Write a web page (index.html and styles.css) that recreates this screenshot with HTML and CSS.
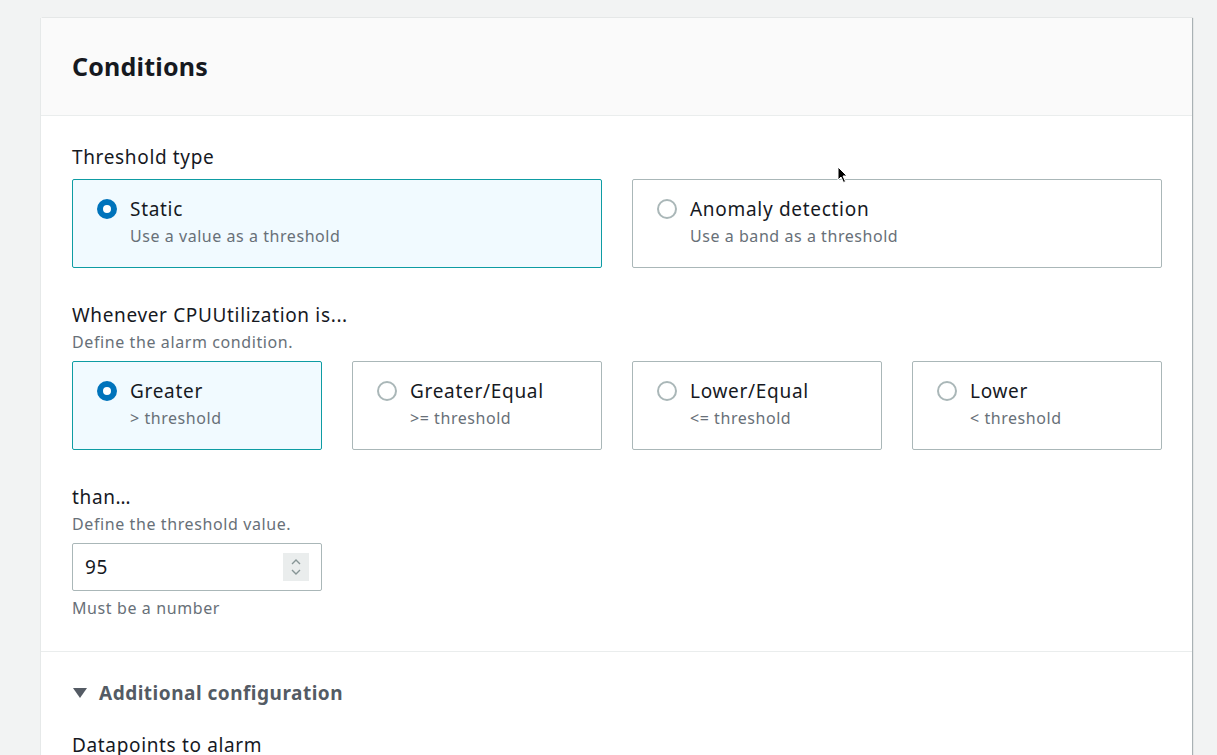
FILE: index.html
```html
<!DOCTYPE html>
<html lang="en">
<head>
<meta charset="utf-8">
<title>Conditions</title>
<link rel="stylesheet" href="styles.css">
</head>
<body>
<div class="page">
  <section class="card">
    <header class="card-header"><h2>Conditions</h2></header>
    <div class="card-body">
      <div class="field first">
        <div class="label">Threshold type</div>
        <div class="tiles two">
          <div class="tile selected"><span class="radio on"></span><div><div class="tile-title">Static</div><div class="tile-sub">Use a value as a threshold</div></div></div>
          <div class="tile"><span class="radio"></span><div><div class="tile-title">Anomaly detection</div><div class="tile-sub">Use a band as a threshold</div></div></div>
        </div>
      </div>
      <div class="field">
        <div class="label">Whenever CPUUtilization is...</div>
        <div class="desc">Define the alarm condition.</div>
        <div class="tiles four">
          <div class="tile selected"><span class="radio on"></span><div><div class="tile-title">Greater</div><div class="tile-sub">&gt; threshold</div></div></div>
          <div class="tile"><span class="radio"></span><div><div class="tile-title">Greater/Equal</div><div class="tile-sub">&gt;= threshold</div></div></div>
          <div class="tile"><span class="radio"></span><div><div class="tile-title">Lower/Equal</div><div class="tile-sub">&lt;= threshold</div></div></div>
          <div class="tile"><span class="radio"></span><div><div class="tile-title">Lower</div><div class="tile-sub">&lt; threshold</div></div></div>
        </div>
      </div>
      <div class="field">
        <div class="label">than…</div>
        <div class="desc">Define the threshold value.</div>
        <div class="input">
          <span class="value">95</span>
          <span class="spinner">
            <svg width="14" height="22" viewBox="0 0 14 22"><path d="M3 8 L7 4 L11 8" fill="none" stroke="#879596" stroke-width="1.4"/><path d="M3 14 L7 18 L11 14" fill="none" stroke="#879596" stroke-width="1.4"/></svg>
          </span>
        </div>
        <div class="hint">Must be a number</div>
      </div>
    </div>
    <div class="card-section">
      <div class="expander"><svg class="caret" width="14" height="12" viewBox="0 0 14 12"><path d="M0 1 L14 1 L7 11 Z" fill="#545b64"/></svg><span>Additional configuration</span></div>
      <div class="label sub-label">Datapoints to alarm</div>
    </div>
  </section>
  <svg class="cursor" width="12" height="18" viewBox="0 0 12 18"><path d="M1 1 L1 14 L4 11 L6.5 16.5 L8.5 15.5 L6 10 L10 10 Z" fill="#000" stroke="#fff" stroke-width="1"/></svg>
</div>
</body>
</html>
```

FILE: styles.css
```css
html, body {
  margin: 0;
  padding: 0;
  background: #f2f3f3;
  font-family: "Noto Sans", "Open Sans", Arial, sans-serif;
  color: #16191f;
  overflow: hidden;
}
.page {
  position: relative;
  padding: 18px 0 0 41px;
  height: 737px;
}
.card {
  width: 1151px;
  background: #fff;
  box-shadow: 1px 0 1px 0 rgba(0, 28, 36, 0.3), -1px 0 0 0 #e6e9e9;
  height: 800px;
}
.card-header {
  height: 97px;
  background: #fafafa;
  border-bottom: 1px solid #eaeded;
  display: flex;
  align-items: center;
  padding-left: 31px;
}
.card-header h2 {
  margin: 0;
  font-size: 25px;
  letter-spacing: 0.2px;
  font-weight: 700;
  line-height: 30px;
  color: #16191f;
  position: relative;
  top: -1px;
}
.card-body {
  padding: 28px 30px 32px 31px;
  border-bottom: 1px solid #eaeded;
}
.field { margin-top: 34px; }
.field.first { margin-top: 0; }
.label {
  font-size: 19px;
  letter-spacing: 0.65px;
  line-height: 26px;
  color: #16191f;
}
.desc {
  font-size: 16px;
  letter-spacing: 0.6px;
  line-height: 22px;
  color: #687078;
  margin-top: 3px;
}
.tiles {
  display: grid;
  gap: 30px;
  margin-top: 8px;
}
.field.first .tiles { margin-top: 9px; }
.tiles.two { grid-template-columns: 1fr 1fr; }
.tiles.four { grid-template-columns: repeat(4, 1fr); }
.tile {
  display: flex;
  align-items: flex-start;
  gap: 13px;
  border: 1px solid #aab7b8;
  border-radius: 2px;
  padding: 16px 24px 0;
  height: 89px;
  box-sizing: border-box;
}
.tile.selected {
  background: #f1faff;
  border-color: #0e9ca3;
}
.radio {
  flex: none;
  width: 20px;
  height: 20px;
  margin-top: 3px;
  border-radius: 50%;
  border: 2px solid #aab7b8;
  box-sizing: border-box;
  background: #fff;
}
.radio.on {
  border: 6px solid #0073bb;
  background: #fff;
}
.tile-title {
  font-size: 19px;
  letter-spacing: 0.7px;
  line-height: 26px;
  color: #16191f;
}
.tile-sub {
  font-size: 16px;
  letter-spacing: 0.55px;
  line-height: 28px;
  color: #687078;
}
.input {
  margin-top: 8px;
  width: 250px;
  height: 48px;
  box-sizing: border-box;
  border: 1px solid #aab7b8;
  border-radius: 2px;
  display: flex;
  align-items: center;
  justify-content: space-between;
  padding: 0 12px 0 12px;
}
.input .value {
  font-size: 19px;
  letter-spacing: 0.6px;
  color: #16191f;
}
.spinner {
  width: 26px;
  height: 28px;
  background: #eaeded;
  display: flex;
  align-items: center;
  justify-content: center;
}
.hint {
  margin-top: 6px;
  font-size: 16px;
  letter-spacing: 0.6px;
  line-height: 22px;
  color: #687078;
}
.card-section {
  padding: 28px 30px 0 31px;
}
.expander {
  display: flex;
  align-items: center;
  gap: 12px;
  font-size: 19px;
  letter-spacing: 0.5px;
  line-height: 26px;
  font-weight: 700;
  color: #545b64;
  padding-left: 1px;
}
.caret { flex: none; }
.sub-label { margin-top: 26px; }
.cursor {
  position: absolute;
  left: 837px;
  top: 166px;
}
```
